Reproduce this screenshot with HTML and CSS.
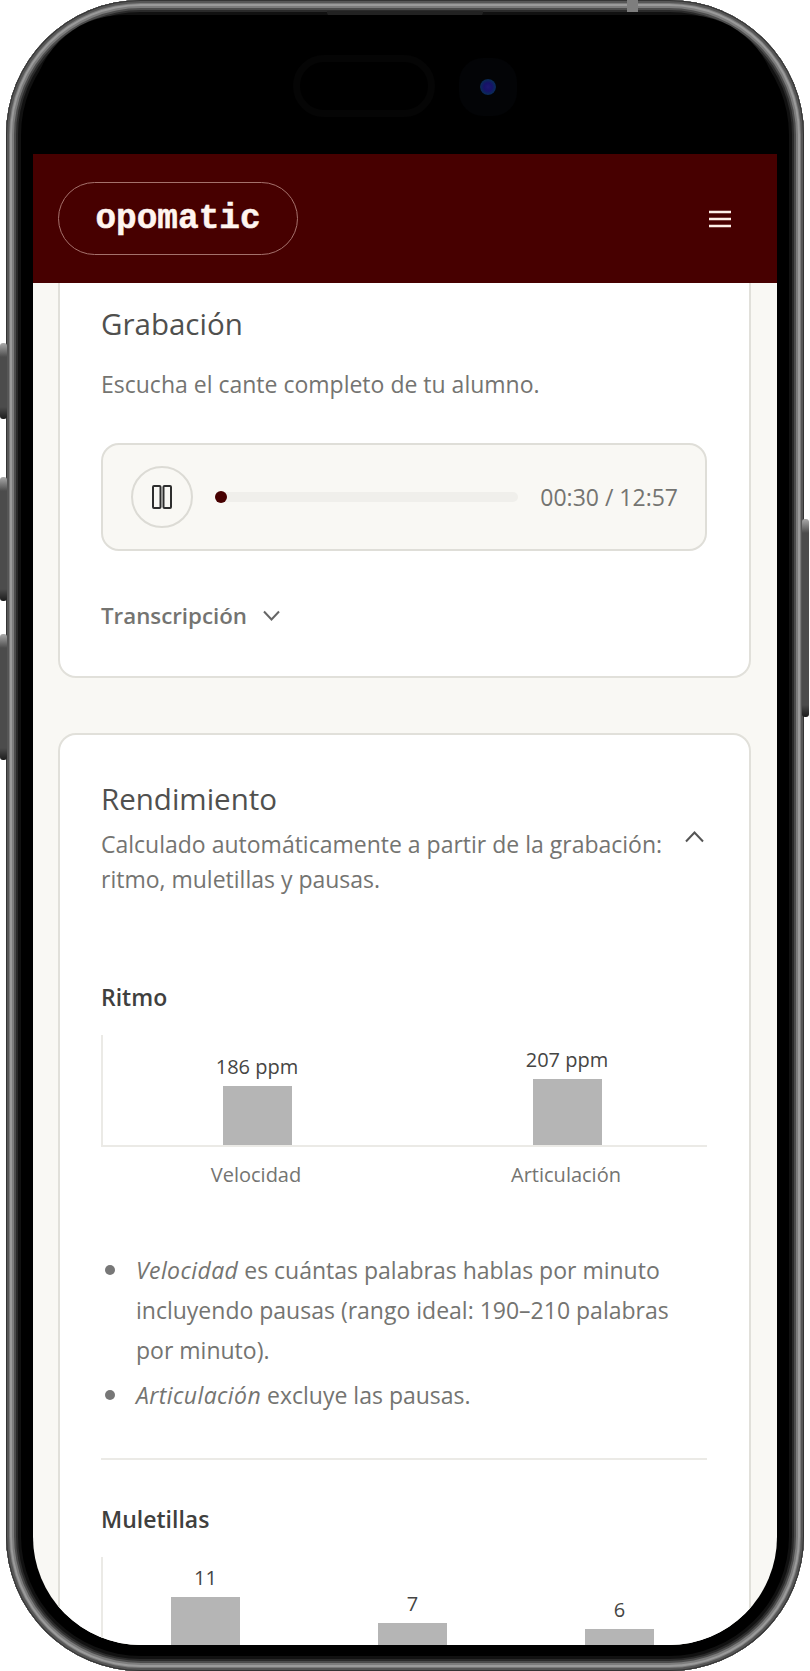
FILE: index.html
```html
<!DOCTYPE html>
<html lang="es">
<head>
    <meta charset="UTF-8">
    <meta name="viewport" content="width=device-width, initial-scale=1.0">
    <title>opomatic</title>
    <link rel="stylesheet" href="styles.css">
</head>
<body>
    <div class="phone">
        <span class="side-btn btn-mute"></span>
        <span class="side-btn btn-up"></span>
        <span class="side-btn btn-down"></span>
        <span class="side-btn btn-power"></span>
        <span class="top-tab"></span>
        <span class="speaker"></span>
        <span class="island"></span>
        <span class="camera"></span>

        <div class="screen">
            <div class="status-area"></div>
            <header class="topbar">
                <a class="logo">opomatic</a>
                <svg class="menu-icon" width="22" height="18" viewBox="0 0 22 18" fill="none" stroke="#fdeee8" stroke-width="2.4">
                    <path d="M0 2h22M0 9h22M0 16h22"/>
                </svg>
            </header>

            <main class="content">
                <section class="card card-first">
                    <h2 class="card-title">Grabación</h2>
                    <p class="card-desc desc-rec">Escucha el cante completo de tu alumno.</p>

                    <div class="player">
                        <button class="play-btn">
                            <svg width="20" height="24" viewBox="0 0 20 24" fill="none" stroke="#2e2e2e" stroke-width="2">
                                <rect x="1" y="1" width="7.5" height="22" rx="1"/>
                                <rect x="11.5" y="1" width="7.5" height="22" rx="1"/>
                            </svg>
                        </button>
                        <div class="track"><span class="track-dot"></span></div>
                        <span class="time">00:30 / 12:57</span>
                    </div>

                    <div class="toggle">
                        <span>Transcripción</span>
                        <svg width="17" height="11" viewBox="0 0 17 11" fill="none" stroke="#666" stroke-width="2">
                            <path d="M1 1.5l7.5 8 7.5-8"/>
                        </svg>
                    </div>
                </section>

                <section class="card card-stats">
                    <div class="stats-head">
                        <div>
                            <h2 class="card-title title-stats">Rendimiento</h2>
                            <p class="card-desc desc-stats">Calculado automáticamente a partir de la grabación: ritmo, muletillas y pausas.</p>
                        </div>
                        <svg class="chevron-up" width="19" height="12" viewBox="0 0 19 12" fill="none" stroke="#555" stroke-width="2">
                            <path d="M1 10.5l8.5-9 8.5 9"/>
                        </svg>
                    </div>

                    <h3 class="sub-title sub-ritmo">Ritmo</h3>
                    <div class="chart">
                        <div class="plot plot-two">
                            <div class="col"><span class="val">186 ppm</span><span class="bar" style="height: 59px"></span></div>
                            <div class="col"><span class="val">207 ppm</span><span class="bar" style="height: 66px"></span></div>
                        </div>
                        <div class="labels">
                            <span>Velocidad</span>
                            <span>Articulación</span>
                        </div>
                    </div>

                    <ul class="notes">
                        <li><em>Velocidad</em> es cuántas palabras hablas por minuto incluyendo pausas (rango ideal: 190–210 palabras por minuto).</li>
                        <li><em>Articulación</em> excluye las pausas.</li>
                    </ul>

                    <hr class="divider">

                    <h3 class="sub-title">Muletillas</h3>
                    <div class="chart">
                        <div class="plot plot-three">
                            <div class="col"><span class="val">11</span><span class="bar" style="height: 70px"></span></div>
                            <div class="col"><span class="val">7</span><span class="bar" style="height: 44px"></span></div>
                            <div class="col"><span class="val">6</span><span class="bar" style="height: 38px"></span></div>
                        </div>
                    </div>
                </section>
            </main>
        </div>
    </div>
</body>
</html>
```

FILE: styles.css
```css
* {
    box-sizing: border-box;
}
body {
    margin: 0;
    background-color: #fff;
    font-family: "Open Sans", "Noto Sans", sans-serif;
    color: #747471;
}
.phone {
    position: relative;
    width: 798px;
    height: 1671px;
    margin-left: 6px;
    padding: 15px 27px 26px;
    background-color: #000;
    border-radius: 135px;
    box-shadow:
        inset 0 0 0 1px #343434,
        inset 0 0 0 3px #565656,
        inset 0 0 0 4px #7a7a7a,
        inset 0 0 0 6px #9a9a9a,
        inset 0 0 0 8px #7c7c7c,
        inset 0 0 0 10px #4c4c4c,
        inset 0 0 0 12px #2a2a2a,
        inset 0 0 0 15px #111;
}
.side-btn {
    position: absolute;
    width: 7px;
    background: linear-gradient(to bottom, #aaa 0, #4c4c4c 14px, #4c4c4c calc(100% - 12px), #1c1c1c 100%);
    border-radius: 3px;
}
.btn-mute {
    left: -6px;
    top: 343px;
    height: 76px;
}
.btn-up {
    left: -6px;
    top: 477px;
    height: 124px;
}
.btn-down {
    left: -6px;
    top: 634px;
    height: 126px;
}
.btn-power {
    right: -5px;
    top: 519px;
    height: 198px;
}
.top-tab {
    position: absolute;
    left: 621px;
    top: 0;
    width: 11px;
    height: 12px;
    background-color: #7e7e7e;
}
.speaker {
    position: absolute;
    left: 321px;
    top: 11px;
    width: 156px;
    height: 5px;
    background-color: #222;
    border-radius: 0 0 4px 4px;
}
.island {
    position: absolute;
    z-index: 2;
    left: 287px;
    top: 55px;
    width: 142px;
    height: 62px;
    border: 7px solid #050505;
    border-radius: 31px;
}
.camera {
    position: absolute;
    z-index: 2;
    left: 474px;
    top: 79px;
    width: 16px;
    height: 16px;
    border-radius: 50%;
    background: radial-gradient(circle at 50% 50%, #1d1870 0, #161268 35%, #0a2a58 65%, #020308 100%);
    box-shadow: 0 0 0 21px #030406;
}
.screen {
    position: relative;
    display: flex;
    flex-direction: column;
    height: 1630px;
    overflow: hidden;
    background-color: #000;
    border-radius: 90px 90px 108px 108px;
}
.status-area {
    flex: none;
    height: 139px;
}
.topbar {
    position: relative;
    z-index: 1;
    flex: none;
    display: flex;
    align-items: center;
    justify-content: space-between;
    height: 129px;
    padding: 0 46px 0 25px;
    background-color: #470000;
}
.logo {
    display: flex;
    align-items: center;
    justify-content: center;
    width: 240px;
    height: 73px;
    border: 1px solid #a5716c;
    border-radius: 37px;
    font-family: "Liberation Mono", monospace;
    font-size: 34.4px;
    font-weight: 700;
    color: #fff5f0;
    -webkit-text-stroke: 0.5px #fff5f0;
}
.menu-icon {
    margin-top: 1px;
}
.content {
    flex: 1;
    min-height: 0;
    padding: 0 26px 0 25px;
    background-color: #f9f8f4;
}
.card {
    padding: 0 42px 0 41px;
    background-color: #fff;
    border: 2px solid #e1e0da;
    border-radius: 18px;
}
.card-first {
    margin-top: -40px;
    padding-top: 61px;
    padding-bottom: 45px;
}
.card-stats {
    margin-top: 55px;
    padding-top: 44px;
}
.card-title {
    margin: 0;
    font-size: 29.5px;
    line-height: 36px;
    font-weight: 400;
    color: #50504e;
}
.title-stats {
    line-height: 40px;
}
.card-desc {
    margin: 0;
    font-size: 23px;
}
.desc-rec {
    margin-top: 24px;
    line-height: 36px;
}
.desc-stats {
    margin-top: 8px;
    line-height: 35px;
}
.player {
    display: flex;
    align-items: center;
    height: 108px;
    margin-top: 41px;
    padding: 0 27px 0 28px;
    background-color: #f9f8f4;
    border: 2px solid #dfded8;
    border-radius: 18px;
}
.play-btn {
    flex: none;
    display: flex;
    align-items: center;
    justify-content: center;
    width: 62px;
    height: 62px;
    padding: 0;
    background-color: #f9f8f4;
    border: 2px solid #dcdbd5;
    border-radius: 50%;
}
.track {
    position: relative;
    width: 303px;
    height: 10px;
    margin-left: 22px;
    background-color: #f0efeb;
    border-radius: 5px;
}
.track-dot {
    position: absolute;
    left: 0;
    top: -1px;
    width: 12px;
    height: 12px;
    background-color: #470000;
    border-radius: 50%;
}
.time {
    margin-left: auto;
    font-size: 23px;
    white-space: nowrap;
}
.toggle {
    display: flex;
    align-items: center;
    gap: 16px;
    height: 32px;
    margin-top: 48px;
    font-size: 22.3px;
    font-weight: 600;
}
.stats-head {
    display: flex;
    align-items: flex-start;
    justify-content: space-between;
}
.chevron-up {
    flex: none;
    margin-top: 52px;
    margin-right: 3px;
}
.sub-title {
    margin: 44px 0 0;
    font-size: 23px;
    line-height: 30px;
    font-weight: 600;
    color: #40403e;
}
.sub-ritmo {
    margin-top: 85px;
}
.chart {
    margin-top: 23px;
}
.plot {
    display: flex;
    align-items: flex-end;
    height: 112px;
    border-left: 2px solid #ebeae6;
    border-bottom: 2px solid #ebeae6;
}
.plot-two {
    gap: 30px;
    padding-left: 14px;
}
.plot-three {
    gap: 32px;
    padding-left: 15px;
}
.plot-two .col,
.labels span {
    width: 280px;
}
.plot-three .col {
    width: 175px;
}
.col {
    display: flex;
    flex-direction: column;
    align-items: center;
    flex: none;
}
.val {
    margin-bottom: 6px;
    font-size: 20px;
    line-height: 26px;
    color: #454543;
}
.bar {
    display: block;
    width: 69px;
    background-color: #b5b5b5;
}
.labels {
    display: flex;
    gap: 30px;
    margin-top: 14px;
    padding-left: 15px;
    font-size: 20px;
    line-height: 28px;
    text-align: center;
}
.notes {
    margin: 61px 0 0;
    padding-left: 35px;
    list-style: none;
    font-size: 23px;
    line-height: 40px;
}
.notes li {
    position: relative;
}
.notes li::before {
    content: "";
    position: absolute;
    left: -31px;
    top: 15px;
    width: 10px;
    height: 10px;
    background-color: #777;
    border-radius: 50%;
}
.notes li + li {
    margin-top: 5px;
}
.notes em {
    letter-spacing: 0.4px;
}
.divider {
    height: 2px;
    margin: 43px 0 0;
    background-color: #ebeae6;
    border: none;
}
```
